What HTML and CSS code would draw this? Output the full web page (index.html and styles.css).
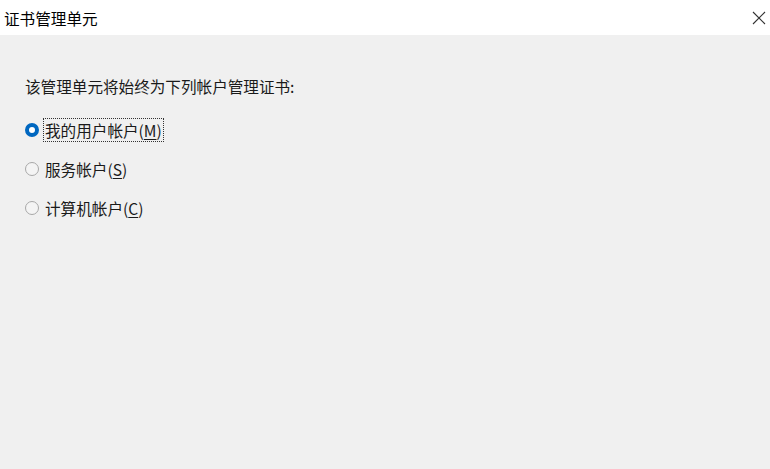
FILE: index.html
```html
<!DOCTYPE html>
<html lang="zh-CN">

<head>
    <meta charset="UTF-8">
    <title>证书管理单元</title>
    <link rel="stylesheet" href="styles.css">
</head>

<body>
    <div class="dialog">
        <div class="titlebar">
            <span class="title">证书管理单元</span>
            <span class="close">
                <svg width="14" height="14" viewBox="0 0 14 14">
                    <path d="M1 1L13 13M13 1L1 13" stroke="#333" stroke-width="1.1" fill="none" />
                </svg>
            </span>
        </div>
        <div class="body">
            <p class="label">该管理单元将始终为下列帐户管理证书:</p>
            <ul class="options">
                <li class="option checked">
                    <span class="radio"></span>
                    <span class="text focus">我的用户帐户(<u>M</u>)</span>
                </li>
                <li class="option">
                    <span class="radio"></span>
                    <span class="text">服务帐户(<u>S</u>)</span>
                </li>
                <li class="option">
                    <span class="radio"></span>
                    <span class="text">计算机帐户(<u>C</u>)</span>
                </li>
            </ul>
        </div>
    </div>
</body>

</html>
```

FILE: styles.css
```css
body,
p,
ul {
    margin: 0;
    padding: 0;
}

ul {
    list-style: none;
}

body {
    background: #f0f0f0;
    font: 15.6px "Microsoft YaHei", "Noto Sans CJK SC", sans-serif;
    color: #1a1a1a;
}

.dialog {
    width: 770px;
    height: 469px;
}

.titlebar {
    height: 35px;
    background: #fff;
    display: flex;
    align-items: center;
    justify-content: space-between;
    padding: 0 4px 0 4px;
    box-sizing: border-box;
}

.title {
    font-size: 15.6px;
    color: #000;
}

.close {
    display: flex;
    width: 14px;
    height: 14px;
}

.body {
    padding: 41px 0 0 25px;
}

.label {
    line-height: 20px;
}

.options {
    margin-top: 23px;
}

.option {
    display: flex;
    align-items: center;
    height: 22px;
    margin-bottom: 17px;
}

.radio {
    width: 14px;
    height: 14px;
    border: 1px solid #a8a8a8;
    border-radius: 50%;
    background: #f4f4f4;
    box-sizing: border-box;
    margin-right: 5px;
}

.checked .radio {
    border: 4px solid #0067c0;
    background: #fff;
}

.text {
    line-height: 22px;
    padding: 0 1px;
}

.text u {
    text-underline-offset: 2px;
}

.focus {
    outline: 1px dotted #333;
    outline-offset: 0;
}
```
